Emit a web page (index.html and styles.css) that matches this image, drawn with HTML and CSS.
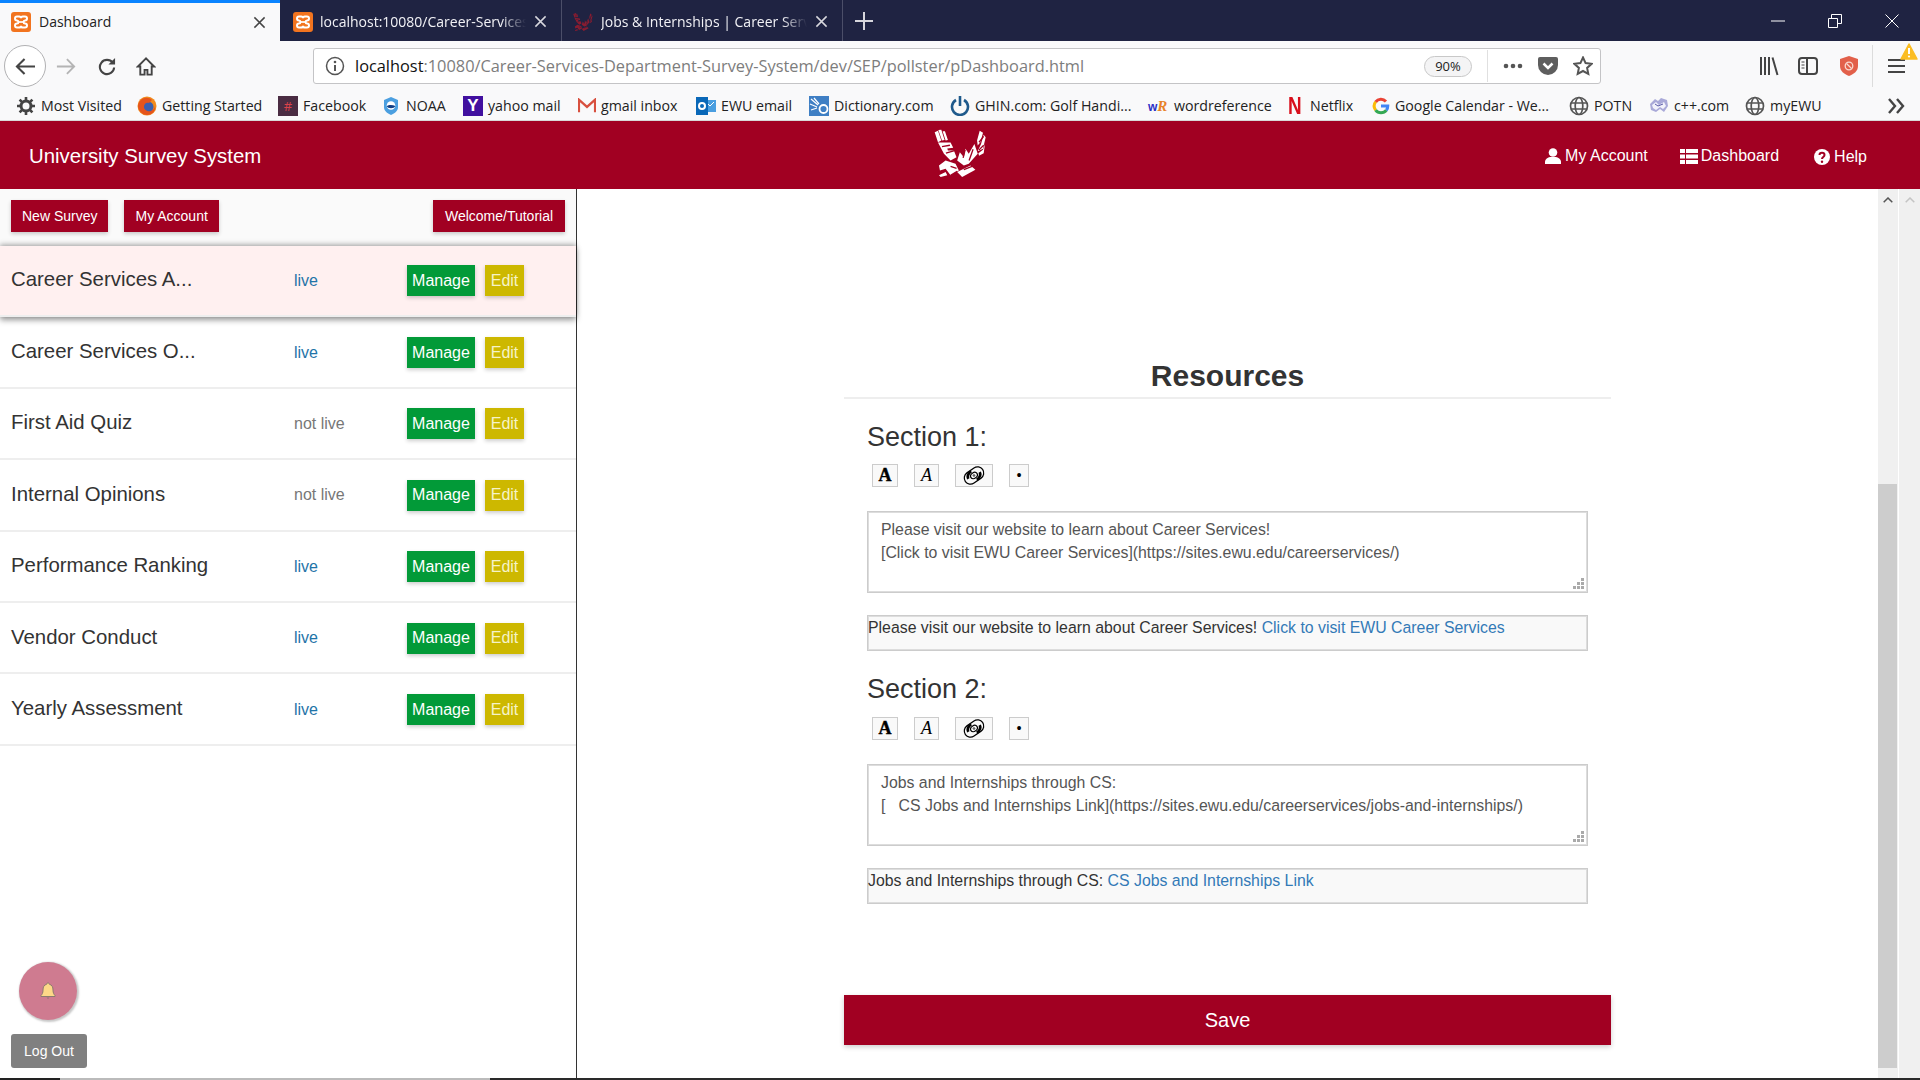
FILE: index.html
```html
<!DOCTYPE html>
<html lang="en">
<head>
<meta charset="utf-8">
<title>Dashboard</title>
<link rel="stylesheet" href="styles.css">
</head>
<body>
<svg class="defs" width="0" height="0" aria-hidden="true">
  <symbol id="xampp" viewBox="0 0 20 20">
    <rect width="20" height="20" rx="3" fill="#f2741f"/>
    <path d="M6 4.500h2.200c1 0 1.800.8 1.800 1.800 0-1 .8-1.800 1.800-1.800H14c1.200 0 2 .9 2 2s-.8 2-2 2c-.9 0-1.400.7-1.400 1.500s.5 1.500 1.400 1.500c1.200 0 2 .9 2 2s-.8 2-2 2h-2.200c-1 0-1.800-.8-1.800-1.800 0 1-.8 1.800-1.800 1.800H6c-1.200 0-2-.9-2-2s.8-2 2-2c.9 0 1.400-.7 1.400-1.500S6.900 8.500 6 8.500c-1.200 0-2-.9-2-2s.8-2 2-2z" fill="none" stroke="#fff" stroke-width="2"/>
    <path d="M7.500 10h5" stroke="#fff" stroke-width="1.700"/>
  </symbol>
  <symbol id="globe" viewBox="0 0 20 20">
    <g fill="none" stroke="#555" stroke-width="1.700">
      <circle cx="10" cy="10" r="8.500"/>
      <ellipse cx="10" cy="10" rx="3.800" ry="8.500"/>
      <path d="M2 7h16M2 13h16"/>
    </g>
  </symbol>
  <symbol id="pen" viewBox="0 0 24 22">
    <g fill="none" stroke="#000">
      <rect x="1" y="4.500" width="22" height="13" rx="6.500" transform="rotate(-35 12 11)" stroke-width="1.300"/>
      <path d="M6 14.500c-1.500-3 .5-6 3-8M18 7.500c1.500 3-.5 6-3 8" stroke-width="2.800"/>
      <ellipse cx="12" cy="11" rx="3.800" ry="3" transform="rotate(-35 12 11)" stroke-width="1.300"/>
      <circle cx="12" cy="11" r=".9" stroke-width=".8"/>
    </g>
  </symbol>
  <symbol id="eagle" viewBox="100 55 160 148">
    <g fill="currentColor">
      <path d="M102 65l10-5 10 30-10 5zM113 58l9-1 10 31-8 2zM126 62l7 0 9 26-7 2z"/>
      <path d="M112 96l38 0 8 16-18 2 2 6 18 0 8 20-18 10-20-20z"/>
      <path d="M238 60l10 6-8 29-8 10-2-15zM250 72l6 8-8 35-16 7 10-22zM254 100l-4 28-14 8-2-8 14-10z"/>
      <path d="M222 100l10 30-27 30-15 5-20-15 8-25 12 15 5-25 10 15z"/>
      <path d="M115 165l20-15 30 10 10 20-25 15-15-20-17 5z"/>
      <path d="M170 185l40-20 15 13-40 22z"/>
      <path d="M115 195l20-10 5 10-20 5z"/>
    </g>
    <path class="eagle-cut" d="M124 108l24-4M136 128l26-8M188 142l6-24M206 150l12-34M150 168l18 6M150 195l20-12M190 178l25-10M236 95l14-18M236 118l14-14"/>
  </symbol>
</svg>

<header class="tabbar">
  <div class="tab tab-active">
    <svg class="fav"><use href="#xampp"/></svg>
    <span class="tab-title">Dashboard</span>
    <svg class="tab-x" viewBox="0 0 14 14"><path d="M1.500 1.500l11 11M12.500 1.500l-11 11" stroke="#444" stroke-width="1.600"/></svg>
  </div>
  <div class="tab tab-2">
    <svg class="fav"><use href="#xampp"/></svg>
    <span class="tab-title tab-fade">localhost:10080/Career-Services</span>
    <svg class="tab-x" viewBox="0 0 14 14"><path d="M1.500 1.500l11 11M12.500 1.500l-11 11" stroke="#d8d8de" stroke-width="1.600"/></svg>
  </div>
  <div class="tab tab-last">
    <svg class="fav fav-eagle"><use href="#eagle"/></svg>
    <span class="tab-title tab-fade">Jobs &amp; Internships | Career Serv</span>
    <svg class="tab-x" viewBox="0 0 14 14"><path d="M1.500 1.500l11 11M12.500 1.500l-11 11" stroke="#d8d8de" stroke-width="1.600"/></svg>
  </div>
  <svg class="tab-plus" viewBox="0 0 18 18"><path d="M9 0v18M0 9h18" stroke="#d6d6dc" stroke-width="2"/></svg>
  <div class="win-btns">
    <svg viewBox="0 0 14 14"><path d="M0 7h14" stroke="#fff" stroke-width="1"/></svg>
    <svg viewBox="0 0 14 14"><path d="M.5 4.500h9v9h-9zM3.500 4.500v-4h10v9h-4" fill="none" stroke="#fff"/></svg>
    <svg viewBox="0 0 14 14"><path d="M.5.500l13 13M13.500.500l-13 13" stroke="#fff"/></svg>
  </div>
</header>

<nav class="toolbar">
  <button class="back" aria-label="Back"><svg viewBox="0 0 22 20"><path d="M21 10H2M10 2l-8 8 8 8" fill="none" stroke="#444" stroke-width="2.200"/></svg></button>
  <svg class="tb-ic fwd" viewBox="0 0 22 20"><path d="M1 10h19M12 2l8 8-8 8" fill="none" stroke="#b4b4b4" stroke-width="2"/></svg>
  <svg class="tb-ic reload" viewBox="0 0 20 20"><path d="M16 6a7.500 7.500 0 1 0 1.500 5" fill="none" stroke="#444" stroke-width="2.200"/><path d="M18.500 1v7h-7z" fill="#444"/></svg>
  <svg class="tb-ic home" viewBox="0 0 20 20"><path d="M10 1.500L1.500 10h2.500v8.500h4.500v-5h3v5H16V10h2.500z" fill="none" stroke="#444" stroke-width="2"/></svg>
  <div class="urlbar">
    <svg class="info" viewBox="0 0 20 20"><circle cx="10" cy="10" r="8.500" fill="none" stroke="#555" stroke-width="1.500"/><path d="M10 9v6" stroke="#555" stroke-width="2"/><circle cx="10" cy="6" r="1.300" fill="#555"/></svg>
    <span class="url"><span class="url-host">localhost</span>:10080/Career-Services-Department-Survey-System/dev/SEP/pollster/pDashboard.html</span>
    <span class="zoom-pill">90%</span>
    <span class="url-sep"></span>
    <svg class="dots" viewBox="0 0 20 6"><circle cx="3" cy="3" r="2.300" fill="#555"/><circle cx="10" cy="3" r="2.300" fill="#555"/><circle cx="17" cy="3" r="2.300" fill="#555"/></svg>
    <svg class="pocket" viewBox="0 0 20 18"><path d="M2 0h16a2 2 0 0 1 2 2v6a10 10 0 0 1-20 0V2a2 2 0 0 1 2-2z" fill="#5e5e5e"/><path d="M5.500 6.500L10 11l4.500-4.500" fill="none" stroke="#fff" stroke-width="2.500"/></svg>
    <svg class="star" viewBox="0 0 20 20"><path d="M10 1.500l2.600 5.600 6 .7-4.500 4.100 1.200 6L10 15l-5.300 2.900 1.200-6L1.400 7.800l6-.7z" fill="none" stroke="#555" stroke-width="2"/></svg>
  </div>
  <div class="tb-right">
    <svg class="lib" viewBox="0 0 20 20"><path d="M2 1v18M6 1v18M10 1v18M13.500 1.500l5 17.500" stroke="#444" stroke-width="2" fill="none"/></svg>
    <svg class="side" viewBox="0 0 20 20"><rect x="1" y="2" width="18" height="16" rx="3" fill="none" stroke="#444" stroke-width="2"/><path d="M9 2v16" stroke="#444" stroke-width="2"/><path d="M3.500 6h3M3.500 9h3M3.500 12h3" stroke="#444"/></svg>
    <svg class="shield" viewBox="0 0 18 20"><path d="M9 0l9 3v7c0 5-4 8-9 10-5-2-9-5-9-10V3z" fill="#e2604a"/><circle cx="9" cy="10" r="3.800" fill="none" stroke="#f9d9d0" stroke-width="1.300"/><path d="M6.500 7.500l5 5" stroke="#f9d9d0" stroke-width="1.300"/></svg>
    <span class="tb-sep"></span>
    <div class="menu">
      <svg class="burger" viewBox="0 0 17 16"><path d="M0 2h17M0 8h17M0 14h17" stroke="#444" stroke-width="2"/></svg>
      <svg class="warn" viewBox="0 0 18 17"><path d="M9 1l8 15H1z" fill="#fbbd23" stroke="#fbbd23" stroke-linejoin="round" stroke-width="1.500"/><path d="M9 5v6" stroke="#fff" stroke-width="2"/><circle cx="9" cy="13.500" r="1.100" fill="#fff"/></svg>
    </div>
  </div>
</nav>

<nav class="bookmarks">
  <a class="bm bm-most"><svg class="bi" viewBox="0 0 20 20"><circle cx="10" cy="10" r="5" fill="none" stroke="#444" stroke-width="3"/><path d="M10 1v4M10 15v4M1 10h4M15 10h4M3.600 3.600l2.900 2.900M13.500 13.500l2.900 2.900M16.400 3.600l-2.900 2.900M6.500 13.500l-2.900 2.900" stroke="#444" stroke-width="2.600"/></svg>Most Visited</a>
  <a class="bm bm-gs"><svg class="bi" viewBox="0 0 20 20"><circle cx="10" cy="10" r="9.500" fill="#f28a1c"/><circle cx="11" cy="11" r="5.500" fill="#3b5fb0"/><path d="M3 5c3-4 9-4 12-1l-3 3c-3-1-5 1-5 4 0 3 4 5 7 4 2-1 4-3 4-5 1 5-3 9-8 9S1 14 1 10c0-2 1-4 2-5z" fill="#e5541c"/></svg>Getting Started</a>
  <a class="bm bm-fb"><span class="bi fb-ic">#</span>Facebook</a>
  <a class="bm bm-noaa"><svg class="bi noaa" viewBox="0 0 16 20"><path d="M8 1l7 3v7c0 4-3 6-7 8-4-2-7-4-7-8V4z" fill="#4b9fe0"/><circle cx="8" cy="9.500" r="4.300" fill="#fff"/><path d="M3.700 10c2-1.500 6-1.500 8.600 0-1 3-7.600 3-8.600 0z" fill="#123f86"/></svg>NOAA</a>
  <a class="bm bm-yahoo"><span class="bi yahoo-ic">Y</span>yahoo mail</a>
  <a class="bm bm-gmail"><svg class="bi gmail" viewBox="0 0 20 16"><path d="M1 15V1l9 8 9-8v14" fill="none" stroke="#d8503f" stroke-width="2.600"/></svg>gmail inbox</a>
  <a class="bm bm-ewu"><svg class="bi" viewBox="0 0 20 20"><rect x="8" y="4" width="12" height="12" fill="#4a9ee0"/><path d="M10 6l4 4 4-4" fill="none" stroke="#fff"/><rect x="0" y="1" width="12" height="18" fill="#0a68b8"/><circle cx="6" cy="10" r="3" fill="none" stroke="#fff" stroke-width="2"/></svg>EWU email</a>
  <a class="bm bm-dict"><svg class="bi" viewBox="0 0 20 20"><rect width="20" height="20" fill="#3f7fc4"/><path d="M2 3l7 6M1 8l7 3M5 2l5 6M2 14l6-2" stroke="#fff" stroke-width="1.200"/><circle cx="14.500" cy="13" r="4" fill="none" stroke="#fff" stroke-width="1.800"/></svg>Dictionary.com</a>
  <a class="bm bm-ghin"><svg class="bi" viewBox="0 0 20 20"><path d="M6 4a8 8 0 1 0 8 0" fill="none" stroke="#1f5a8c" stroke-width="2.600"/><path d="M10 0v10" stroke="#1f5a8c" stroke-width="2.600"/></svg>GHIN.com: Golf Handi...</a>
  <a class="bm bm-wr"><span class="bi wr-ic"><span class="wr-w">w</span><span class="wr-r">R</span></span>wordreference</a>
  <a class="bm bm-nf"><span class="nf-ic">N</span>Netflix</a>
  <a class="bm bm-g"><svg class="bi gg" viewBox="0 0 20 20"><g fill="none" stroke-width="3.400"><path d="M15.500 5A7.500 7.500 0 0 0 4 5.500" stroke="#ea4335"/><path d="M4 5.500a7.500 7.500 0 0 0 0 9" stroke="#fbbc05"/><path d="M4 14.500a7.500 7.500 0 0 0 12 0" stroke="#34a853"/><path d="M16 14.500c1-1 1.500-2.500 1.500-4.500H10" stroke="#4285f4"/></g></svg>Google Calendar - We...</a>
  <a class="bm bm-potn"><svg class="bi"><use href="#globe"/></svg>POTN</a>
  <a class="bm bm-cpp"><svg class="bi" viewBox="0 0 20 20"><path d="M1 8l5-5 3 2 3-3 6 2 1 6-4 6-4-3-4 3-5-2z" fill="#a9a9d8"/><path d="M3 9l4-3 3 3 5-3 2 4-3 3-3-2-4 3-3-2z" fill="#f2f2fb"/><path d="M6 8l3 2 5-2" stroke="#5a5aa8" fill="none"/></svg>c++.com</a>
  <a class="bm bm-ewu2"><svg class="bi"><use href="#globe"/></svg>myEWU</a>
  <svg class="more" viewBox="0 0 18 16"><path d="M2 1l6 7-6 7M10 1l6 7-6 7" fill="none" stroke="#444" stroke-width="2.400"/></svg>
</nav>

<header class="app-head">
  <div class="app-title">University Survey System</div>
  <svg class="logo" role="img" aria-label="EWU eagle"><use href="#eagle"/></svg>
  <div class="app-nav">
    <a class="nav-link nav-acct"><svg class="nav-ic" viewBox="0 0 16 16"><circle cx="8" cy="4.500" r="4.300" fill="#fff"/><path d="M0 16v-2c0-3 3-4.500 5-5h6c2 .5 5 2 5 5v2z" fill="#fff"/></svg>My Account</a>
    <a class="nav-link nav-dash"><svg class="nav-ic" viewBox="0 0 18 15"><path d="M0 0h5v4H0zM6 0h12v4H6zM0 5.500h5v4H0zM6 5.500h12v4H6zM0 11h5v4H0zM6 11h12v4H6z" fill="#fff"/></svg>Dashboard</a>
    <a class="nav-link nav-help"><svg class="nav-ic" viewBox="0 0 16 16"><circle cx="8" cy="8" r="8" fill="#fff"/><path d="M5.500 6c0-3 5-3 5 0 0 2-2.500 2-2.500 4" fill="none" stroke="#a10022" stroke-width="2"/><circle cx="8" cy="12.700" r="1.200" fill="#a10022"/></svg>Help</a>
  </div>
</header>

<div class="work">
  <aside class="sidebar">
    <div class="side-top">
      <button class="btn-red">New Survey</button>
      <button class="btn-red">My Account</button>
      <button class="btn-red btn-right">Welcome/Tutorial</button>
    </div>
    <div class="row row-active"><span class="r-name">Career Services A...</span><span class="r-state live">live</span><button class="btn-m">Manage</button><button class="btn-e">Edit</button></div>
    <div class="row"><span class="r-name">Career Services O...</span><span class="r-state live">live</span><button class="btn-m">Manage</button><button class="btn-e">Edit</button></div>
    <div class="row"><span class="r-name">First Aid Quiz</span><span class="r-state off">not live</span><button class="btn-m">Manage</button><button class="btn-e">Edit</button></div>
    <div class="row"><span class="r-name">Internal Opinions</span><span class="r-state off">not live</span><button class="btn-m">Manage</button><button class="btn-e">Edit</button></div>
    <div class="row"><span class="r-name">Performance Ranking</span><span class="r-state live">live</span><button class="btn-m">Manage</button><button class="btn-e">Edit</button></div>
    <div class="row"><span class="r-name">Vendor Conduct</span><span class="r-state live">live</span><button class="btn-m">Manage</button><button class="btn-e">Edit</button></div>
    <div class="row"><span class="r-name">Yearly Assessment</span><span class="r-state live">live</span><button class="btn-m">Manage</button><button class="btn-e">Edit</button></div>
    <div class="side-foot">
      <div class="bell"><svg viewBox="0 0 16 18"><path d="M8 1c1 0 1.300.7 1.300 1.200C12 3 13 5 13 8c0 3 1 4.500 2 5.500v1H1v-1c1-1 2-2.500 2-5.500 0-3 1-5 3.700-5.800C6.700 1.700 7 1 8 1z" fill="#fdd888" stroke="#8c7a70"/><path d="M6.500 15.500h3L8 17z" fill="#8c7a70"/></svg></div>
      <button class="logout">Log Out</button>
    </div>
  </aside>

  <main class="content">
    <div class="col">
      <h1 class="res-title">Resources</h1>
      <section class="sec">
        <h2 class="sec-title">Section 1:</h2>
        <div class="fmt">
          <span class="f f-b">A</span><span class="f f-i">A</span><span class="f f-l"><svg><use href="#pen"/></svg></span><span class="f f-d">&bull;</span>
        </div>
        <div class="ta">Please visit our website to learn about Career Services!
[Click to visit EWU Career Services](https://sites.ewu.edu/careerservices/)<svg class="grip" viewBox="0 0 11 11"><path d="M8 0h3v3H8zM4 4h3v3H4zM8 4h3v3H8zM0 8h3v3H0zM4 8h3v3H4zM8 8h3v3H8z" fill="#aaa"/></svg></div>
        <div class="preview">Please visit our website to learn about Career Services! <a class="plink">Click to visit EWU Career Services</a></div>
      </section>
      <section class="sec sec2">
        <h2 class="sec-title">Section 2:</h2>
        <div class="fmt">
          <span class="f f-b">A</span><span class="f f-i">A</span><span class="f f-l"><svg><use href="#pen"/></svg></span><span class="f f-d">&bull;</span>
        </div>
        <div class="ta">Jobs and Internships through CS:
[   CS Jobs and Internships Link](https://sites.ewu.edu/careerservices/jobs-and-internships/)<svg class="grip" viewBox="0 0 11 11"><path d="M8 0h3v3H8zM4 4h3v3H4zM8 4h3v3H8zM0 8h3v3H0zM4 8h3v3H4zM8 8h3v3H8z" fill="#aaa"/></svg></div>
        <div class="preview">Jobs and Internships through CS: <a class="plink">CS Jobs and Internships Link</a></div>
      </section>
      <button class="save">Save</button>
    </div>
  </main>

  <div class="sbar">
    <svg class="chev" viewBox="0 0 10 6"><path d="M.7 5.300L5 1l4.300 4.300" fill="none" stroke="#555" stroke-width="1.500"/></svg>
    <div class="thumb"></div>
  </div>
  <div class="sbar sbar-outer">
    <svg class="chev" viewBox="0 0 10 6"><path d="M.7 5.300L5 1l4.300 4.300" fill="none" stroke="#c4c4c4" stroke-width="1.500"/></svg>
  </div>
</div>
<div class="strip"><span class="s-a"></span><span class="s-b"></span><span class="s-c"></span></div>
</body>
</html>
```
FILE: styles.css
```css
* { box-sizing: border-box; }
html, body { margin: 0; height: 1080px; overflow: hidden; }
body { display: flex; flex-direction: column; width: 1920px; background: #fff; font-family: "Liberation Sans", Arial, sans-serif; color: #333; }
.defs { position: absolute; }
button { font-family: inherit; border: 0; cursor: pointer; }
.eagle-cut { fill: none; stroke: var(--cut, #a10022); stroke-width: 4; }

/* browser tab strip */
.tabbar { height: 41px; flex: none; display: flex; align-items: stretch; background: #1f2342; font-family: "Open Sans", sans-serif; font-size: 14px; line-height: 18px; color: #f2f2f6; }
.tab { width: 282px; display: flex; align-items: center; padding: 2px 14px 0 11px; border-right: 1px solid #4b4e68; }
.tab-2 { padding-left: 13px; }
.tab-2 .fav { margin-right: 7px; }
.tab-last { width: 281px; }
.tab-active { width: 280px; background: #f9f9fa; border-top: 3px solid #0a84ff; border-right: 0; padding-top: 0; color: #222; }
.fav { width: 20px; height: 20px; flex: none; margin-right: 8px; }
.fav-eagle { color: #8a1c30; --cut: #1f2342; }
.tab-title { flex: 1; min-width: 0; white-space: nowrap; overflow: hidden; }
.tab-fade { -webkit-mask-image: linear-gradient(to right, #000 88%, transparent); mask-image: linear-gradient(to right, #000 88%, transparent); }
.tab-x { width: 13px; height: 13px; flex: none; margin-left: 8px; }
.tab-plus { width: 18px; height: 18px; align-self: center; margin-left: 12px; }
.win-btns { margin-left: auto; display: flex; align-items: center; gap: 43px; padding-right: 21px; }
.win-btns svg { width: 14px; height: 14px; }

/* browser toolbar */
.toolbar { height: 44px; flex: none; position: relative; display: flex; align-items: center; background: #f9f9fa; padding: 6px 0 0 4px; font-family: "Open Sans", sans-serif; }
.back { width: 42px; height: 42px; flex: none; border-radius: 50%; background: #fff; border: 1px solid #b1b1b3; padding: 0; display: flex; align-items: center; justify-content: center; }
.back svg { width: 21px; height: 19px; }
.tb-ic { width: 20px; height: 19px; flex: none; }
.fwd { margin-left: 10px; }
.reload { margin-left: 21px; }
.home { margin-left: 19px; }
.urlbar { width: 1288px; height: 36px; margin-left: 157px; flex: none; display: flex; align-items: center; background: #fff; border: 1px solid #c4c4c6; border-radius: 3px; padding: 0 6px 0 11px; font-size: 16.350px; }
.info { width: 20px; height: 20px; flex: none; }
.url { margin-left: 10px; width: 1090px; flex: none; white-space: nowrap; color: #7d7d7d; }
.url-host { color: #111; }
.zoom-pill { width: 48px; height: 21px; flex: none; border: 1px solid #c8c8c8; border-radius: 11px; background: #f4f4f5; font-size: 13px; line-height: 19px; text-align: center; color: #222; margin-left: -21px; }
.url-sep { width: 1px; height: 32px; background: #e0e0e0; margin-left: 15px; flex: none; }
.dots { width: 20px; height: 6px; margin-left: 15px; flex: none; }
.pocket { width: 20px; height: 18px; margin-left: 15px; flex: none; }
.star { width: 20px; height: 20px; margin-left: 15px; flex: none; }
.tb-right { display: flex; align-items: center; margin-left: 158px; }
.lib { width: 20px; height: 20px; }
.side { width: 20px; height: 20px; margin-left: 19px; }
.shield { width: 18px; height: 20px; margin-left: 22px; }
.tb-sep { width: 1px; height: 42px; background: #dcdcdc; margin-left: 14px; }
.menu { position: relative; margin-left: 15px; width: 17px; height: 16px; }
.burger { width: 17px; height: 16px; display: block; }
.warn { position: absolute; left: 12px; top: -15px; width: 18px; height: 17px; }

/* bookmarks */
.bookmarks { height: 36px; flex: none; display: flex; align-items: center; background: #f9f9fa; border-bottom: 1px solid #d8d8d8; padding: 6px 0 0 16px; font-family: "Open Sans", sans-serif; font-size: 14.200px; color: #222; }
.bm { display: flex; align-items: center; white-space: nowrap; gap: 5px; flex: none; }
.bi { width: 20px; height: 20px; flex: none; }
.bm-most { width: 121px; }
.bm-gs { width: 141px; }
.bm-fb { width: 105px; }
.bm-noaa { width: 80px; gap: 7px; }
.bm-yahoo { width: 115px; }
.bm-gmail { width: 118px; }
.bm-ewu { width: 113px; }
.bm-dict { width: 141px; }
.bm-ghin { width: 198px; }
.bm-wr { width: 140px; gap: 6px; }
.bm-nf { width: 84px; }
.bm-g { width: 197px; }
.bm-potn { width: 80px; }
.bm-cpp { width: 96px; }
.bm-ewu2 { width: 142px; }
.more { width: 18px; height: 16px; flex: none; }
.fb-ic { background: #4a2c42; color: #d9424a; font-size: 13px; line-height: 20px; text-align: center; }
.yahoo-ic { background: #41109f; color: #fff; font: bold 17px/20px "Liberation Sans", sans-serif; text-align: center; }
.noaa { width: 16px; }
.gmail { height: 16px; width: 18px; }
.wr-ic { font: bold 12px/20px "Liberation Sans", sans-serif; white-space: nowrap; }
.wr-w { color: #2a2fc4; }
.wr-r { color: #e8832a; font-family: "Liberation Serif", serif; font-size: 15px; font-style: italic; }
.nf-ic { width: 15px; margin-right: 2px; color: #d80f1c; font: bold 23px/24px "Liberation Sans Narrow", "Liberation Sans", sans-serif; transform: scaleX(.82); transform-origin: left center; }
.gg { width: 18px; height: 18px; }

/* app header */
.app-head { height: 68px; flex: none; display: grid; grid-template-columns: 1fr 53px 1fr; align-items: center; background: #a10022; color: #fff; }
.app-title { padding: 2px 0 0 29px; font-size: 20.400px; }
.logo { width: 53px; height: 49px; margin-top: -4px; justify-self: center; color: #fff; }
.app-nav { display: flex; align-items: center; justify-content: flex-end; font-size: 16px; padding: 2px 53px 0 0; }
.nav-link { display: flex; align-items: center; gap: 4px; white-space: nowrap; }
.nav-acct { margin-right: 32px; }
.nav-dash { margin-right: 35px; gap: 3px; }
.nav-ic { width: 16px; height: 16px; flex: none; }
.nav-dash .nav-ic { width: 18px; height: 15px; }
.nav-help { padding-top: 2px; }

/* work area */
.work { flex: 1; min-height: 0; display: flex; }
.sidebar { width: 577px; flex: none; display: flex; flex-direction: column; border-right: 1px solid #333; background: #fff; }
.side-top { height: 57px; flex: none; display: flex; align-items: center; gap: 16px; padding: 0 11px; background: #fafafa; }
.btn-red { height: 32px; padding: 0 11px; margin-top: -3px; background: #a10022; color: #fff; font-size: 14px; box-shadow: 0 2px 4px rgba(0,0,0,.2); }
.btn-right { margin-left: auto; width: 132px; padding: 0; }
.row { height: 71.400px; flex: none; display: flex; align-items: center; padding: 1px 0 0 11px; border-bottom: 2px solid #eee; background: #fff; }
.row-active { position: relative; padding-top: 0; background: #fff0f0; box-shadow: 0 3px 6px rgba(0,0,0,.4), 0 -2px 5px rgba(0,0,0,.25); }
.r-name { width: 283px; font-size: 20.400px; color: #333; white-space: nowrap; margin-top: -2px; }
.r-state { width: 113px; font-size: 16px; }
.live { color: #1f74a8; }
.off { color: #777; }
.btn-m, .btn-e { height: 31px; padding: 0; font-size: 16px; box-shadow: 0 2px 4px rgba(0,0,0,.2); flex: none; }
.btn-m { width: 68px; background: #029a38; color: #fff; }
.btn-e { width: 39px; margin-left: 10px; background: #cdb800; color: #f6f3c8; }
.side-foot { margin-top: auto; padding: 0 0 10px 11px; display: flex; flex-direction: column; align-items: flex-start; }
.bell { width: 58px; height: 58px; margin-left: 8px; border-radius: 50%; background: #cf7b90; box-shadow: 1px 1px 2px 1px rgba(0,0,0,.22); display: flex; align-items: center; justify-content: center; }
.bell svg { width: 16px; height: 18px; }
.logout { width: 76px; height: 34px; margin-top: 14px; border-radius: 3px; background: #808080; color: #fff; font-size: 14px; padding: 0; }

/* main panel */
.content { flex: 1; min-width: 0; background: #fff; }
.col { width: 767px; margin-left: 267px; padding-top: 168px; }
.res-title { margin: 0; height: 42px; border-bottom: 2px solid #eee; text-align: center; font-size: 30px; line-height: 38px; font-weight: bold; color: #333; }
.sec { padding: 0 23px; margin-top: 19px; }
.sec2 { margin-top: 19px; }
.sec-title { margin: 0; font-size: 27px; line-height: 38px; font-weight: normal; color: #333; }
.fmt { display: flex; align-items: center; gap: 16px; margin: 8px 0 0 5px; }
.sec2 .fmt { margin-top: 9px; }
.f { height: 23px; display: flex; align-items: center; justify-content: center; background: #f9f9f9; border: 1px solid #ccc; color: #000; font-family: "Liberation Serif", serif; font-size: 18px; }
.f-b { width: 26px; font-weight: bold; -webkit-text-stroke: .4px #000; }
.f-i { width: 25px; font-style: italic; font-size: 18px; }
.f-l { width: 38px; }
.f-l svg { width: 24px; height: 21px; display: block; }
.f-d { width: 20px; font-size: 16px; }
.ta { position: relative; height: 82px; margin-top: 24px; padding: 7px 13px 0; border: 1px solid #ccc; background: #fff; color: #555; font-size: 15.850px; line-height: 22.500px; white-space: pre-wrap; box-shadow: inset 0 0 0 1px #ddd; }
.grip { position: absolute; right: 3px; bottom: 3px; width: 11px; height: 11px; }
.preview { height: 36px; margin-top: 22px; padding: 2px 0 0; border: 1px solid #ccc; background: #f9f9f9; color: #333; font-size: 15.850px; line-height: 20px; white-space: nowrap; box-shadow: inset 0 0 0 1px #ddd; }
.plink { color: #337ab7; }
.save { display: block; width: 100%; height: 50px; margin-top: 91px; padding: 0; background: #a10022; color: #fff; font-size: 20px; box-shadow: 0 2px 5px rgba(0,0,0,.2); }

/* scrollbars */
.sbar { width: 20px; flex: none; background: #f0f0f0; display: flex; flex-direction: column; align-items: center; }
.sbar-outer { width: 21px; margin-left: 1px; }
.chev { width: 10px; height: 6px; margin-top: 8px; flex: none; }
.thumb { width: 19px; height: 584px; margin-top: 281px; margin-right: 1px; background: #cdcdcd; }

.strip { height: 2px; flex: none; display: flex; }
.s-a { width: 60px; background: #222; }
.s-b { width: 430px; background: #bbb; }
.s-c { flex: 1; background: #2a2a2a; }
```
